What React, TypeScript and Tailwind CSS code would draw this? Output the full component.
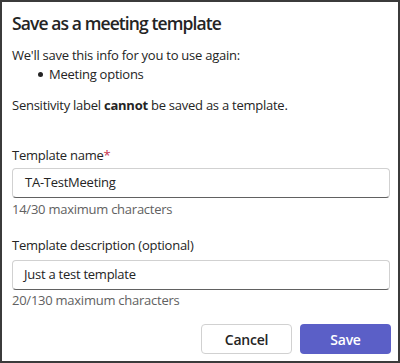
import React from "react";

export default function App() {
  return (
    <div
      className="w-[400px] h-[363px] bg-white border-2 border-[#3b3b3b] text-[#242424] flex flex-col pl-[10px] pr-[7px]"
      style={{ fontFamily: '"Open Sans", "Noto Sans", sans-serif' }}
    >
      <div className="mt-[9px] h-[24px] text-[17.5px] leading-[24px] font-semibold tracking-[-0.9px]">
        Save as a meeting template
      </div>
      <div className="mt-[11px] text-[13px] leading-[19px] tracking-[-0.25px]">
        We'll save this info for you to use again:
      </div>
      <ul className="text-[13px] leading-[19px] tracking-[-0.25px] pl-[26px]">
        <li className="flex items-center gap-[6px]">
          <span className="w-[5px] h-[5px] rounded-full bg-[#242424] inline-block" />
          <span>Meeting options</span>
        </li>
      </ul>
      <div className="mt-[12px] text-[13px] leading-[19px] tracking-[-0.25px]">
        Sensitivity label <span className="font-bold">cannot</span> be saved as a template.
      </div>
      <div className="mt-[31px] text-[13px] leading-[19px] tracking-[-0.25px]">
        Template name<span className="text-[#c4314b]">*</span>
      </div>
      <div className="mt-[3px] h-[30px] w-[378px] rounded-[4px] border border-[#d1d1d1] border-b-[#616161] flex items-center px-[12px] text-[13px] tracking-[-0.25px]">
        TA-TestMeeting
      </div>
      <div className="mt-[2px] text-[13px] leading-[19px] text-[#616161] tracking-[-0.25px]">
        14/30 maximum characters
      </div>
      <div className="mt-[17px] text-[13px] leading-[19px] tracking-[-0.25px]">
        Template description (optional)
      </div>
      <div className="mt-[5px] h-[30px] w-[378px] rounded-[4px] border border-[#d1d1d1] border-b-[#616161] flex items-center px-[11px] text-[13px] tracking-[-0.25px]">
        Just a test template
      </div>
      <div className="mt-[1px] text-[13px] leading-[19px] text-[#616161] tracking-[-0.25px]">
        20/130 maximum characters
      </div>
      <div className="mt-[14px] flex justify-end gap-[8px] w-[379px]">
        <button className="w-[91px] h-[30px] rounded-[4px] border border-[#d1d1d1] bg-white text-[14px] font-semibold text-[#242424] tracking-[-0.25px]">
          Cancel
        </button>
        <button className="w-[91px] h-[30px] rounded-[4px] bg-[#5b5fc7] text-[14px] font-semibold text-white tracking-[-0.25px]">
          Save
        </button>
      </div>
    </div>
  );
}
